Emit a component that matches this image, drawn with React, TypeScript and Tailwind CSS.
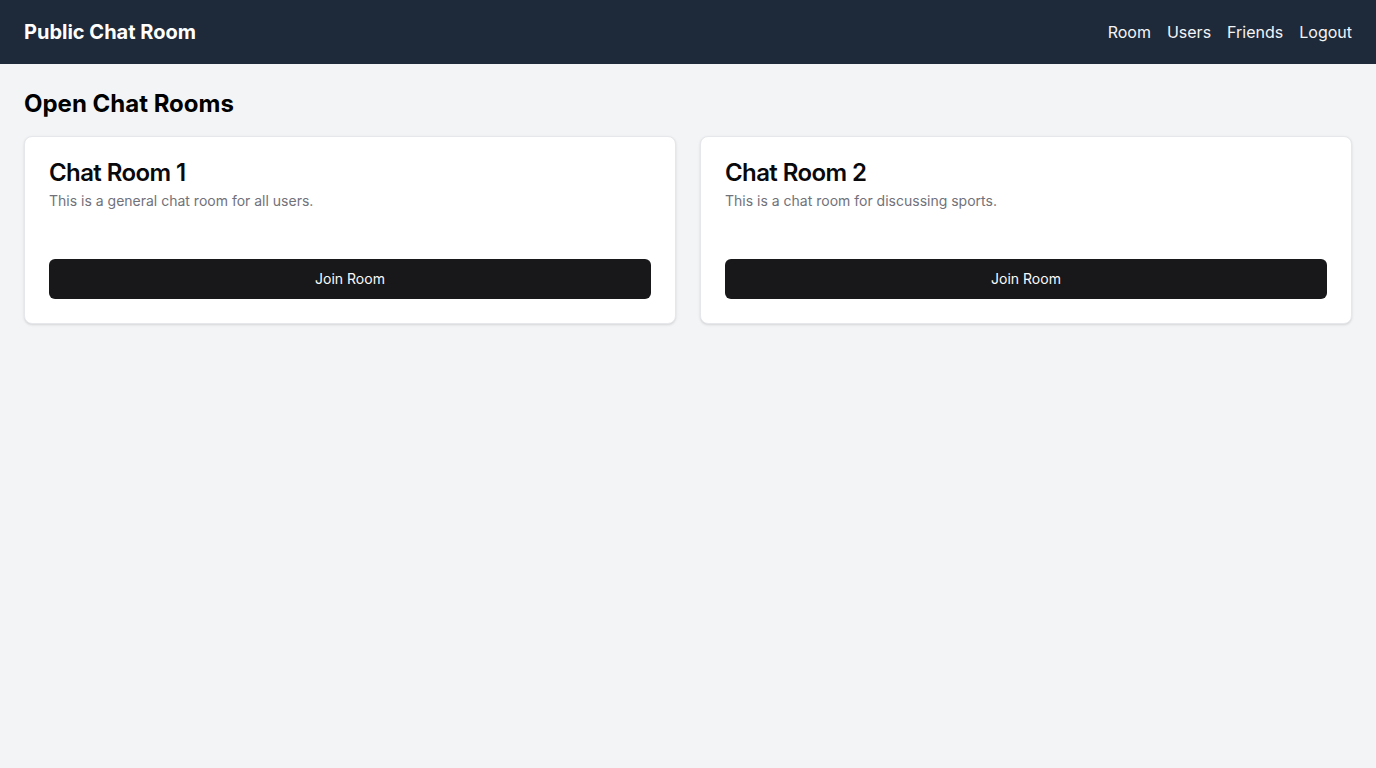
export default function App() {
  const rooms = [
    { id: 1, name: "Chat Room 1", description: "This is a general chat room for all users." },
    { id: 2, name: "Chat Room 2", description: "This is a chat room for discussing sports." },
  ];

  return (
    <div className="min-h-screen bg-gray-100" style={{ fontFamily: "Inter, 'Noto Sans', sans-serif" }}>
      <header className="h-16 bg-gray-800 text-white flex items-center justify-between px-6">
        <h1 className="text-xl font-bold">Public Chat Room</h1>
        <nav className="flex gap-4 text-base text-gray-100">
          <a href="#">Room</a>
          <a href="#">Users</a>
          <a href="#">Friends</a>
          <a href="#">Logout</a>
        </nav>
      </header>

      <main className="p-6">
        <h2 className="text-2xl font-bold mb-4 text-black">Open Chat Rooms</h2>
        <div className="grid grid-cols-2 gap-6">
          {rooms.map((room) => (
            <div key={room.id} className="bg-white rounded-lg border border-gray-200 shadow-sm">
              <div className="p-6 flex flex-col gap-1.5">
                <h3 className="text-2xl font-semibold leading-none tracking-tight text-[#09090b]">{room.name}</h3>
                <p className="text-sm text-[#71717a]">{room.description}</p>
              </div>
              <div className="p-6 pt-0"></div>
              <div className="p-6 pt-0">
                <button className="w-full h-10 rounded-md bg-[#18181b] text-[#fafafa] text-sm font-normal">
                  Join Room
                </button>
              </div>
            </div>
          ))}
        </div>
      </main>
    </div>
  );
}
